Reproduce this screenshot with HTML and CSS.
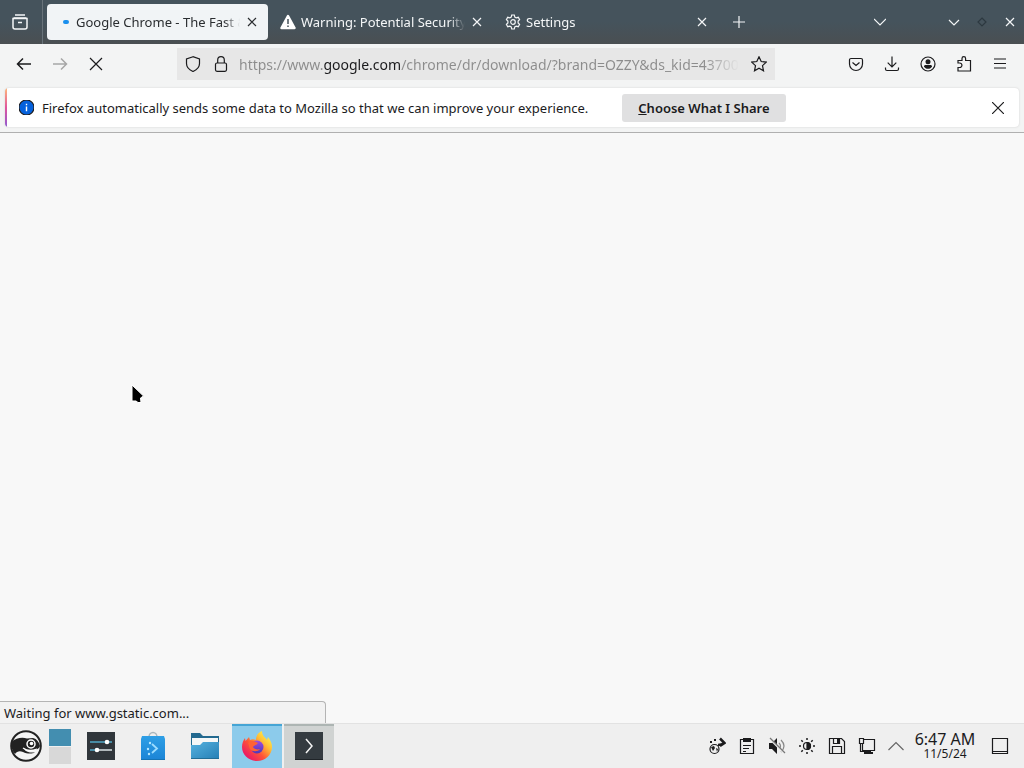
FILE: index.html
```html
<!DOCTYPE html>
<html lang="en">
<head>
  <meta charset="UTF-8">
  <title>Google Chrome - The Fast</title>
  <link rel="stylesheet" href="styles.css">
</head>
<body>

<div class="tab-bar">
  <button class="view-button" aria-label="Firefox View">
    <svg class="icon" viewBox="0 0 18 18"><path d="M4 2h10M2.500 5h13"/><path d="M2 5.500h14v8.500a2 2 0 0 1-2 2H4a2 2 0 0 1-2-2zM7 9.500h4"/></svg>
  </button>
  <div class="tab active">
    <span class="tab-icon"><span class="throbber"></span></span>
    <span class="tab-title">Google Chrome - The Fast &amp;</span>
    <button class="tab-close" aria-label="Close tab"><svg viewBox="0 0 8 8"><path d="M0 0l8 8M8 0L0 8"/></svg></button>
  </div>
  <div class="tab">
    <svg class="tab-icon" viewBox="0 0 16 16"><path d="M8 2L14.500 14h-13z" fill="#fff" stroke="#fff" stroke-width="2.500" stroke-linejoin="round"/><path d="M8 5v5M8 11.500v1.500" stroke="#46535b" stroke-width="1.500"/></svg>
    <span class="tab-title">Warning: Potential Security</span>
    <button class="tab-close" aria-label="Close tab"><svg viewBox="0 0 8 8"><path d="M0 0l8 8M8 0L0 8"/></svg></button>
  </div>
  <div class="tab">
    <svg class="tab-icon" viewBox="0 0 16 16"><circle cx="8" cy="8" r="2.300"/><path d="M6.700 1h2.600l.5 2.100 1.400.8 2.100-.6 1.300 2.300-1.500 1.500v1.800l1.500 1.500-1.300 2.300-2.100-.6-1.400.8-.5 2.100H6.700l-.5-2.100-1.400-.8-2.100.6-1.300-2.300 1.500-1.500V7.100L1.400 5.600l1.300-2.300 2.100.6 1.400-.8z"/></svg>
    <span class="tab-title">Settings</span>
    <button class="tab-close" aria-label="Close tab"><svg viewBox="0 0 8 8"><path d="M0 0l8 8M8 0L0 8"/></svg></button>
  </div>
  <button class="new-tab" aria-label="New tab"><svg viewBox="0 0 12 12"><path d="M6 0v12M0 6h12"/></svg></button>
  <button class="all-tabs" aria-label="List all tabs"><svg viewBox="0 0 12 12"><path d="M0 3l6 6 6-6"/></svg></button>
  <div class="window-buttons">
    <button aria-label="Minimize"><svg viewBox="0 0 12 12"><path d="M1 4l5 5 5-5"/></svg></button>
    <button class="restore" aria-label="Maximize"><svg viewBox="0 0 12 12"><path d="M6 2l4 4-4 4-4-4z"/></svg></button>
    <button aria-label="Close"><svg viewBox="0 0 12 12"><path d="M2 2l8 8M10 2l-8 8"/></svg></button>
  </div>
</div>

<div class="toolbar">
  <button aria-label="Back"><svg viewBox="0 0 16 16"><path d="M15 8H1.500M7 2.500L1.500 8 7 13.500" stroke-width="1.500"/></svg></button>
  <button class="disabled" aria-label="Forward" disabled><svg viewBox="0 0 16 16"><path d="M1 8h13.500M9 2.500L14.500 8 9 13.500" stroke-width="1.500"/></svg></button>
  <button aria-label="Stop"><svg viewBox="0 0 16 16"><path d="M2 2l12 12M14 2L2 14"/></svg></button>
  <div class="url-bar">
    <button aria-label="Tracking protection"><svg viewBox="0 0 16 16"><path d="M8 .7L1.500 3v4.500c0 4 3.500 6.700 6.500 8 3-1.300 6.500-4 6.500-8V3z"/></svg></button>
    <button class="lock" aria-label="Site information"><svg viewBox="0 0 16 16"><rect x="2.500" y="7" width="11" height="8.300" rx="1.500"/><path d="M4.700 7V4a3.300 3.300 0 0 1 6.600 0v3"/></svg></button>
    <input class="url-input" type="text" aria-label="Address" value="https://www.google.com/chrome/dr/download/?brand=OZZY&amp;ds_kid=43700079">
    <button aria-label="Bookmark this page"><svg viewBox="0 0 16 16"><path d="M8 .8l2.200 4.700 5.100.6-3.800 3.500 1 5.200L8 12.200l-4.500 2.600 1-5.200L.7 6.100l5.100-.6z"/></svg></button>
  </div>
  <button aria-label="Save to Pocket"><svg viewBox="0 0 16 16"><path d="M3 2.500h10a1.500 1.500 0 0 1 1.500 1.500v4a6.500 6.500 0 0 1-13 0V4A1.500 1.500 0 0 1 3 2.500zM4.500 6.500L8 9.500l3.500-3"/></svg></button>
  <button aria-label="Downloads"><svg viewBox="0 0 16 16"><path d="M8 .5V11M3.700 6.700L8 11l4.300-4.300M1.500 11.500V13A1.500 1.500 0 0 0 3 14.500h10a1.500 1.500 0 0 0 1.500-1.500v-1.500"/></svg></button>
  <button aria-label="Account"><svg viewBox="0 0 16 16"><circle cx="8" cy="8" r="7"/><circle cx="8" cy="5.700" r="2.500" fill="currentColor" stroke="none"/><path d="M4 10.500c0-1 .8-1.500 1.500-1.500h5c.7 0 1.500.5 1.500 1.500-.8 1.500-2.200 2.300-4 2.300s-3.200-.8-4-2.300z" fill="currentColor" stroke="none"/></svg></button>
  <button aria-label="Extensions"><svg viewBox="0 0 16 16"><path d="M2 7V4.500h4V2.500a1.800 1.800 0 0 1 3.600 0v2h4.900V15H2v-3.500h1.700a2.200 2.200 0 0 0 0-4.500z"/></svg></button>
  <button aria-label="Open menu"><svg viewBox="0 0 16 16"><path d="M2 3h12M2 7.500h12M2 12h12"/></svg></button>
</div>

<div class="notification-box">
  <div class="notification">
    <svg class="info-icon" viewBox="0 0 16 16"><circle cx="8" cy="8" r="8" fill="#0561dc"/><path d="M8 4v1.500M8 7v5" stroke="#fff" stroke-width="1.500"/></svg>
    <span class="message">Firefox automatically sends some data to Mozilla so that we can improve your experience.</span>
    <button class="choose"><u>C</u>hoose What I Share</button>
    <button class="dismiss" aria-label="Dismiss"><svg viewBox="0 0 12 12"><path d="M0 0l12 12M12 0L0 12"/></svg></button>
  </div>
</div>

<main class="page">
  <svg class="cursor" viewBox="0 0 14 20"><path d="M1 1v16h4l2 1.500h3l-.5-4.500 3-2z"/></svg>
  <div class="status">Waiting for www.gstatic.com...</div>
</main>

<div class="taskbar">
  <button class="launcher" aria-label="Application launcher">
    <svg viewBox="0 0 32 32"><circle cx="16" cy="16" r="14.800" fill="#f4f4f4" stroke="#222" stroke-width="2"/><path d="M1.500 12C6 8 12 7 17 8.500l6-.5c4 1 6 4 7 8-1 3-4 4-8 4-3 0-6 0-8-1 2 3 6 4 11 3.500-3 1.500-8 1.500-12-.5-3-1.500-6-1-8 2C2 21 1 16 1.500 12z" fill="#222"/><circle cx="21" cy="14" r="4" fill="#222" stroke="#fff" stroke-width="1.500"/><circle cx="21.500" cy="13.500" r="1.800" fill="#fff"/><path d="M13 18c4 3 9 3 14 1" fill="none" stroke="#fff" stroke-width="1.200"/></svg>
  </button>
  <div class="pager"><button class="desk current" aria-label="Desktop 1"></button><button class="desk" aria-label="Desktop 2"></button></div>
  <button class="task" aria-label="System Settings">
    <svg viewBox="0 0 32 32"><path d="M2 2h28v28H2z" fill="#30363b"/><path d="M5 12h22" stroke="#51a9c8" stroke-width="1.500"/><path d="M12 20h15" stroke="#dce6e9" stroke-width="1.500"/><path d="M5 20h7" stroke="#51a9c8" stroke-width="1.500"/><circle cx="22" cy="12" r="2.300" fill="#fff"/><circle cx="12" cy="20" r="2.300" fill="#fff"/></svg>
  </button>
  <button class="task" aria-label="Discover">
    <svg viewBox="0 0 32 32">
      <defs><linearGradient id="bag" x2="0" y2="1"><stop stop-color="#2e9fe6"/><stop offset="1" stop-color="#1b84d6"/></linearGradient></defs>
      <path d="M12 7a4 4.500 0 0 1 8 0" fill="none" stroke="#a9b6bd" stroke-width="1.500"/><path d="M5 6h22l1 3v21H4V9z" fill="url(#bag)"/><path d="M4 29h24v1H4z" fill="#1573b5"/><path d="M15 14l5 4.500-5 4.500" fill="none" stroke="#9bdcff" stroke-width="1.800"/><g fill="#b5e6ff"><circle cx="11" cy="19" r="1.200"/><circle cx="12" cy="24" r="1.200"/><circle cx="13" cy="13" r="1.200"/></g>
    </svg>
  </button>
  <button class="task" aria-label="Files">
    <svg viewBox="0 0 32 32">
      <defs><linearGradient id="folder" x2="1" y2="1"><stop stop-color="#55b1df"/><stop offset="1" stop-color="#257fb5"/></linearGradient></defs>
      <path d="M2 3h9l3 3h16v14H2z" fill="#23698f"/><path d="M3 8h26v12H3z" fill="#f5f7f7"/><path d="M2 15h9l3-3h16v17H2z" fill="url(#folder)"/><path d="M2 28h28v1H2z" fill="#216d96"/>
    </svg>
  </button>
  <button class="task focused" aria-label="Firefox">
    <svg viewBox="0 0 32 32">
      <defs>
        <linearGradient id="flame" x1=".85" y1=".1" x2=".15" y2=".8"><stop stop-color="#fff04a"/><stop offset=".3" stop-color="#ffbd35"/><stop offset=".65" stop-color="#ff5338"/><stop offset="1" stop-color="#ec1f62"/></linearGradient>
        <linearGradient id="globe" x2="0" y2="1"><stop stop-color="#a04ce0"/><stop offset="1" stop-color="#4c38b8"/></linearGradient>
      </defs>
      <path d="M16 31C7.500 31 1 24.500 1 17c0-4 1.500-7 3-9l.5 3L8 7l1 3c2-1 4-1 6 0 0-5 3-8 6-9 0 5 3 6 5 9l1-3c3 4 4 7 4 10 0 8-7 14-15 14z" fill="url(#flame)"/><circle cx="16" cy="17" r="6.500" fill="url(#globe)"/><path d="M7 13c3-3 7-2 10 0-1 2-4 2-5 4 1 2 4 3 7 2-2 3-8 3-10 0-1-2-1-4-2-6z" fill="#ff6235"/>
    </svg>
  </button>
  <button class="task open" aria-label="Konsole">
    <svg viewBox="0 0 32 32"><path d="M2 2h28v28H2z" fill="#343b40"/><path d="M2 29h28v1H2z" fill="#1f2428"/><path d="M13 9l6 7-6 7" fill="none" stroke="#f4f4f4" stroke-width="1.500"/></svg>
  </button>

  <div class="tray">
    <button aria-label="Updates"><svg viewBox="0 0 18 18"><circle cx="6.500" cy="12" r="4.500"/><path d="M3 10l3-1 1 2-2 3zM8 11l2 1-1 3z" fill="currentColor" stroke="none"/><path d="M10 8c3 0 5-1 6-2M12 1.500L16.500 6 12 9" stroke-width="2.500"/><path d="M2 4h2v2H2zM6 2h2v2H6z" fill="currentColor" stroke="none"/></svg></button>
    <button aria-label="Clipboard"><svg viewBox="0 0 18 18"><path d="M2.500 2.500h13v14h-13zM5 8.500h8M5 11.500h6M5 14.500h3"/><path d="M5 1h8v4H5z" fill="currentColor" stroke="none"/></svg></button>
    <button aria-label="Volume muted"><svg viewBox="0 0 18 18"><path d="M1 6h3l5-5v16l-5-5H1z" fill="currentColor" stroke="none"/><path d="M11 6c2 2 2 4 0 6M13 3c4 4 4 8 0 12" stroke="#888"/><path d="M1 1l16 16" stroke="#eee" stroke-width="2"/><path d="M2 1l15 15" stroke="#777"/></svg></button>
    <button aria-label="Brightness"><svg viewBox="0 0 18 18"><circle cx="9" cy="9" r="3.500"/><path d="M9 5.500a3.500 3.500 0 0 1 0 7z" fill="currentColor"/><path d="M9 1v2M9 15v2M1 9h2M15 9h2M3.300 3.300l1.500 1.500M13.200 13.200l1.500 1.500M3.300 14.700l1.500-1.500M13.200 4.800l1.500-1.500" stroke-width="1.500"/></svg></button>
    <button aria-label="Disks"><svg viewBox="0 0 18 18"><path d="M1.500 1.500h12l3 3v12h-15zM4.500 16v-6.500h9V16M5.500 2v4.500h6V2"/><path d="M9 2h2v4H9z" fill="currentColor" stroke="none"/></svg></button>
    <button aria-label="Display"><svg viewBox="0 0 18 18"><path d="M6 2.500h10.500v11H4.500V7M1.500 1.500h4v5h-4zM2.500 7v7.500h5"/><path d="M7 13h6v2H7zM6 15h9v2H6z" fill="currentColor" stroke="none"/></svg></button>
    <button class="expand" aria-label="Show hidden icons"><svg viewBox="0 0 18 18"><path d="M1.500 13L9 5.500l7.500 7.500"/></svg></button>
  </div>
  <div class="clock">
    <span class="time">6:47 AM</span>
    <span class="date">11/5/24</span>
  </div>
  <button class="show-desktop" aria-label="Show desktop"><svg viewBox="0 0 18 18"><path d="M1.500 1.500h15v15h-15zM2 14.500h14"/></svg></button>
</div>

</body>
</html>
```
FILE: styles.css
```css
* {
  box-sizing: border-box;
}

body {
  margin: 0;
  height: 100vh;
  display: flex;
  flex-direction: column;
  overflow: hidden;
  font-family: "Noto Sans", sans-serif;
  font-size: 13px;
  color: #1b1b1d;
  background: #f8f8f8;
}

button {
  display: flex;
  align-items: center;
  justify-content: center;
  flex: none;
  padding: 0;
  border: none;
  background: none;
  color: inherit;
  font: inherit;
}

svg {
  display: block;
  flex: none;
  fill: none;
  stroke: currentColor;
  stroke-width: 1.2;
}

/* tabs */
.tab-bar {
  display: flex;
  align-items: center;
  gap: 4px;
  height: 44px;
  flex: none;
  background: linear-gradient(#45535c 50%, #4a4f52);
  color: #f4f6f7;
}

.view-button {
  width: 43px;
  height: 44px;
  padding-right: 3px;
  border-right: 1px solid #69737a;
}

.view-button svg {
  width: 18px;
  height: 18px;
  stroke-width: 1.5;
}

.tab {
  display: flex;
  align-items: center;
  flex: 0 1 221px;
  min-width: 0;
  height: 36px;
  padding: 0 8px;
  border-radius: 4px;
}

.tab.active {
  background: #f1f4f6;
  color: #2a2d30;
}

.tab-icon {
  display: flex;
  align-items: center;
  justify-content: center;
  width: 16px;
  height: 16px;
  margin-right: 5px;
}

.throbber {
  width: 6px;
  height: 4px;
  border-radius: 2px;
  background: #1a8fee;
  margin-left: 6px;
}

.tab-title {
  flex: 1;
  overflow: hidden;
  white-space: nowrap;
  mask-image: linear-gradient(to left, transparent 4px, #000 20px);
}

.tab-close {
  width: 16px;
  height: 16px;
}

.tab-close svg {
  width: 8px;
  height: 8px;
  overflow: visible;
}

.new-tab {
  width: 34px;
  height: 34px;
}

.new-tab svg,
.all-tabs svg,
.window-buttons svg {
  width: 12px;
  height: 12px;
}

.all-tabs {
  width: 34px;
  height: 34px;
  margin-left: auto;
  margin-right: 39px;
}

.window-buttons {
  display: flex;
}

.window-buttons button {
  width: 28px;
  height: 28px;
}

.window-buttons .restore {
  color: #2d3940;
}

/* navigation */
.toolbar {
  display: flex;
  align-items: center;
  gap: 4px;
  height: 40px;
  flex: none;
  padding: 0 8px;
  background: #f3f4f4;
}

.toolbar button {
  width: 32px;
  height: 32px;
}

.toolbar svg {
  width: 16px;
  height: 16px;
}

.toolbar .disabled {
  color: #a6a6a6;
}

.url-bar {
  display: flex;
  align-items: center;
  flex: 1;
  min-width: 0;
  height: 32px;
  margin: 0 61px;
  background: #e7e7e7;
}

.url-bar .lock {
  width: 24px;
}

.url-input {
  flex: 1;
  min-width: 0;
  height: 32px;
  margin: 0 4px 0 6px;
  padding: 0;
  border: none;
  outline: none;
  font: 14px "Noto Sans", sans-serif;
  /* the host part of the address is darker than the rest */
  color: transparent;
  background: linear-gradient(to right, #8c8c8c 84px, #1b1b1d 84px, #1b1b1d 162px, #8c8c8c 162px);
  background-clip: text;
  mask-image: linear-gradient(to left, transparent, #000 36px);
}

/* data notice */
.notification-box {
  flex: none;
  padding: 4px 5px 5px;
  background: #f3f4f4;
  border-bottom: 1px solid #b0b0b0;
}

.notification {
  display: flex;
  align-items: center;
  height: 39px;
  padding: 0 5px 0 14px;
  border-radius: 4px;
  background: linear-gradient(#ffb87a, #e0559d 50%, #9059d0) left / 2px 100% no-repeat, #fff;
  box-shadow: 0 0 2px #ccc;
}

.info-icon {
  width: 15px;
  height: 15px;
  margin-right: 8px;
}

.message {
  white-space: nowrap;
}

.choose {
  height: 28px;
  margin-left: 34px;
  padding: 0 16px;
  border-radius: 3px;
  background: #e0e0e1;
  font-weight: 600;
}

.dismiss {
  width: 32px;
  height: 32px;
  margin-left: auto;
}

.dismiss svg {
  width: 12px;
  height: 12px;
}

/* page */
.page {
  position: relative;
  flex: 1;
  background: #f8f8f8;
}

.cursor {
  position: absolute;
  left: 131px;
  top: 251px;
  width: 14px;
  height: 20px;
  fill: #000;
  stroke: #fff;
  stroke-width: 1;
}

.status {
  position: absolute;
  left: 0;
  bottom: 0;
  width: 326px;
  height: 22px;
  padding: 0 4px;
  line-height: 22px;
  border: 1px solid #b4b4b4;
  border-width: 1px 1px 0 0;
  border-radius: 0 4px 0 0;
  background: #f2f2f2;
}

/* taskbar */
.taskbar {
  display: flex;
  align-items: center;
  height: 45px;
  flex: none;
  padding-right: 8px;
  background: #efefef;
  border-top: 1px solid #e2e2e2;
}

.launcher {
  width: 49px;
  height: 44px;
  padding-left: 3px;
}

.launcher svg,
.task svg {
  width: 32px;
  height: 32px;
  stroke: none;
}

.pager {
  display: flex;
  flex-direction: column;
  gap: 1px;
  width: 22px;
  margin-right: 5px;
}

.desk {
  height: 17px;
  background: #d8d8d8;
}

.desk.current {
  background: #438eb0;
}

.task {
  width: 50px;
  height: 44px;
  margin-right: 2px;
}

.task.focused {
  background: #8ccbeb;
  box-shadow: inset 0 2px #45a5d5;
}

.task.open {
  background: #d0d3d2;
  box-shadow: inset 0 2px #adb5b3;
}

.tray {
  display: flex;
  margin-left: auto;
}

.tray button {
  width: 30px;
  height: 44px;
}

.tray svg,
.show-desktop svg {
  width: 18px;
  height: 18px;
}

.tray .expand {
  width: 28px;
  color: #666;
}

.clock {
  display: flex;
  flex-direction: column;
  align-items: center;
  width: 70px;
}

.time {
  font-size: 16px;
  line-height: 16px;
}

.date {
  font-size: 12px;
  line-height: 14px;
}

.show-desktop {
  width: 32px;
  height: 44px;
  margin-left: 4px;
}
```
